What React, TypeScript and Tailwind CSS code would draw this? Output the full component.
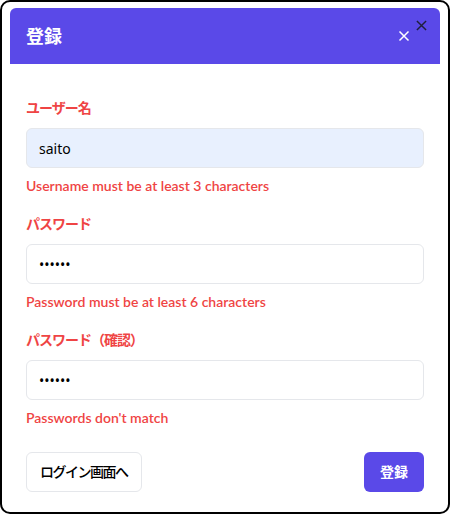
import React from 'react';

const font = { fontFamily: 'Lato, "Noto Sans CJK JP", sans-serif' };
const inputFont = { fontFamily: '"Noto Sans", "Noto Sans CJK JP", sans-serif' };

const fields = [
  { label: 'ユーザー名', value: 'saito', type: 'text', error: 'Username must be at least 3 characters', filled: true },
  { label: 'パスワード', value: '123456', type: 'password', error: 'Password must be at least 6 characters', filled: false },
  { label: 'パスワード（確認）', value: '123457', type: 'password', error: "Passwords don't match", filled: false },
];

const App: React.FC = () => {
  return (
    <div className="w-[451px] h-[514px] bg-white" style={font}>
      <div className="relative w-[450px] h-[514px] border-2 border-black rounded-[10px] bg-white pt-[6px] px-[8px]">
        {/* close of the dialog */}
        <button className="absolute right-[21px] top-[18px] text-[#1f1f3a]">
          <svg width="11" height="11" viewBox="0 0 12 12" fill="none" stroke="currentColor" strokeWidth="1.6">
            <path d="M1 1L11 11M11 1L1 11" />
          </svg>
        </button>

        {/* Header */}
        <div className="h-[56px] bg-[#5a49e8] rounded-t-md flex items-center justify-between pl-4 pr-[30px]">
          <h2 className="text-white text-lg font-bold">登録</h2>
          <button className="text-white">
            <svg width="12" height="12" viewBox="0 0 12 12" fill="none" stroke="currentColor" strokeWidth="1.5">
              <path d="M1.5 1.5L10.5 10.5M10.5 1.5L1.5 10.5" />
            </svg>
          </button>
        </div>

        {/* Body */}
        <div className="px-4 pt-[34px]">
          <div className="flex flex-col gap-[18px]">
            {fields.map((f) => (
              <div key={f.label}>
                <label className="block text-sm leading-5 font-semibold text-[#ef4444] mb-[10px] tracking-[-1px]">{f.label}</label>
                <input
                  type={f.type}
                  defaultValue={f.value}
                  readOnly
                  className={`w-full h-10 px-3 text-sm text-black rounded-md border border-[#e5e7eb] outline-none ${f.filled ? 'bg-[#e8f0fe]' : 'bg-white'}`}
                  style={inputFont}
                />
                <p className="mt-2 text-sm leading-5 font-semibold text-[#ef4444]">{f.error}</p>
              </div>
            ))}
          </div>

          <div className="flex justify-between items-center mt-6">
            <button className="h-10 px-[13px] rounded-md border border-[#e5e7eb] bg-white text-sm font-medium text-black tracking-[-1.5px] whitespace-nowrap">
              ログイン画面へ
            </button>
            <button className="h-10 w-[60px] rounded-md bg-[#5a49e8] text-sm font-bold text-white">
              登録
            </button>
          </div>
        </div>
      </div>
    </div>
  );
};

export default App;
